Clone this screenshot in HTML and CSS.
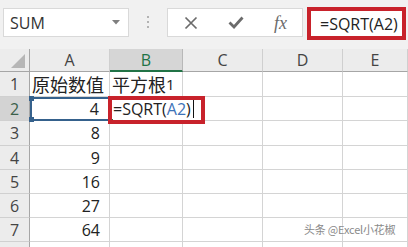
FILE: index.html
```html
<!DOCTYPE html>
<html lang="zh">
<head>
<meta charset="utf-8">
<link rel="stylesheet" href="styles.css">
</head>
<body>
<div class="app">
  <div class="toolbar">
    <div class="namebox">
      <span class="nb-text">SUM</span>
      <svg class="nb-arrow" width="8" height="5" viewBox="0 0 8 5"><polygon points="0,0 8,0 4,4.5" fill="#7f7f7f"/></svg>
    </div>
    <div class="dots"><i></i><i></i><i></i></div>
    <div class="fxbox">
      <svg class="ico-x" width="14" height="14" viewBox="0 0 14 14"><path d="M1.5 1.5 L12.5 12.5 M12.5 1.5 L1.5 12.5" stroke="#6b6b6b" stroke-width="1.7" fill="none"/></svg>
      <svg class="ico-check" width="16" height="13" viewBox="0 0 16 13"><path d="M1.5 6.5 L6 11 L14.5 1.5" stroke="#6b6b6b" stroke-width="2.8" fill="none"/></svg>
      <span class="ico-fx">fx</span>
    </div>
    <div class="formula"><span>=SQRT(A2)</span></div>
  </div>

  <div class="sheet">
    <div class="hd corner"><svg width="16" height="16" viewBox="0 0 16 16"><polygon points="15,1 15,15 1,15" fill="#b6b6b6"/></svg></div>
    <div class="hd col">A</div>
    <div class="hd col sel">B</div>
    <div class="hd col">C</div>
    <div class="hd col">D</div>
    <div class="hd col">E</div>

    <div class="hd row">1</div>
    <div class="c cjk">原始数值</div>
    <div class="c cjk">平方根<span class="one">1</span></div>
    <div class="c"></div><div class="c"></div><div class="c"></div>

    <div class="hd row sel">2</div>
    <div class="c num ref">4<i class="h tl"></i><i class="h bl"></i></div>
    <div class="c edit"><span class="etext">=SQRT(<span class="blue">A2</span>)<i class="caret"></i></span><i class="uline"></i><i class="redbox"></i></div>
    <div class="c"></div><div class="c"></div><div class="c"></div>

    <div class="hd row">3</div>
    <div class="c num">8</div>
    <div class="c"></div><div class="c"></div><div class="c"></div><div class="c"></div>

    <div class="hd row">4</div>
    <div class="c num">9</div>
    <div class="c"></div><div class="c"></div><div class="c"></div><div class="c"></div>

    <div class="hd row">5</div>
    <div class="c num">16</div>
    <div class="c"></div><div class="c"></div><div class="c"></div><div class="c"></div>

    <div class="hd row">6</div>
    <div class="c num">27</div>
    <div class="c"></div><div class="c"></div><div class="c"></div><div class="c"></div>

    <div class="hd row">7</div>
    <div class="c num">64</div>
    <div class="c"></div><div class="c"></div><div class="c"></div><div class="c"></div>

    <div class="hd row last"></div>
    <div class="c last"></div><div class="c last"></div><div class="c last"></div><div class="c last"></div><div class="c last"></div>

    <div class="watermark">头条 @Excel小花椒</div>
  </div>
</div>
</body>
</html>
```

FILE: styles.css
```css
* { box-sizing: border-box; }
html, body { margin: 0; padding: 0; }
body {
  width: 408px;
  height: 247px;
  overflow: hidden;
  background: #ffffff;
  font-family: "Open Sans", "Noto Sans CJK SC", sans-serif;
  color: #222;
}
.app { width: 408px; height: 247px; overflow: hidden; }

.toolbar {
  height: 49px;
  background: #f1f1f1;
  display: flex;
  align-items: flex-start;
  padding-left: 3px;
}
.namebox {
  margin-top: 8px;
  width: 126px;
  height: 29px;
  background: #fff;
  border: 1px solid #d9d9d9;
  display: flex;
  align-items: center;
  justify-content: space-between;
  padding: 0 8px 0 6px;
}
.nb-text { font-size: 16px; color: #333; }
.nb-arrow { display: block; }
.dots {
  margin-top: 16px;
  margin-left: 18px;
  width: 2px;
  display: flex;
  flex-direction: column;
  gap: 3px;
}
.dots i { display: block; width: 2px; height: 2px; background: #b3b3b3; }
.fxbox {
  margin-top: 8px;
  margin-left: 18px;
  width: 136px;
  height: 29px;
  background: #fff;
  border: 1px solid #d9d9d9;
  display: flex;
  align-items: center;
  padding-left: 16px;
}
.ico-x { display: block; }
.ico-check { display: block; margin-left: 30px; }
.ico-fx {
  margin-left: 30px;
  font-family: "Liberation Serif", "DejaVu Serif", serif;
  font-style: italic;
  font-size: 18px;
  color: #6b6b6b;
  line-height: 1;
}
.formula {
  margin-top: 7px;
  margin-left: 4px;
  width: 99px;
  height: 33px;
  border: 4px solid #c8222b;
  background: #fff;
  display: flex;
  align-items: center;
  padding-left: 9px;
  font-size: 16px;
  color: #222;
}

.sheet {
  position: relative;
  display: grid;
  grid-template-columns: 30px 80px 73px 80px 80px 65px;
  grid-template-rows: 23px 25px 24px 25px 24px 24px 24px 24px 5px;
  background: #fff;
}
.hd {
  background: #ececec;
  color: #444;
  font-size: 16px;
  display: flex;
  align-items: center;
  justify-content: center;
}
.hd.col {
  border-right: 1px solid #cfcfcf;
  border-bottom: 1px solid #a6a6a6;
}
.hd.col.sel {
  background: #d6d6d6;
  color: #217346;
  border-bottom: 2px solid #217346;
  border-right: 1px solid #b8b8b8;
}
.hd.corner {
  border-right: 1px solid #a6a6a6;
  border-bottom: 1px solid #a6a6a6;
  align-items: flex-end;
  justify-content: flex-end;
  padding: 0 3px 2px 0;
}
.hd.corner svg { display: block; }
.hd.row {
  border-right: 1px solid #a6a6a6;
  border-bottom: 1px solid #d0d0d0;
}
.hd.row.sel {
  background: #d3d3d3;
  color: #3b5f4a;
}
.last { border-bottom: 0 !important; }
.c {
  border-right: 1px solid #d4d4d4;
  border-bottom: 1px solid #d4d4d4;
  font-size: 16px;
  display: flex;
  align-items: center;
  padding: 0 3px;
  white-space: nowrap;
  position: relative;
}
.c.cjk {
  font-size: 18px;
  padding-left: 2px;
}
.c.cjk .one { font-size: 15px; }
.c.num {
  justify-content: flex-end;
  padding-right: 9px;
}
.c.ref {
  border: 2px solid #35618c;
}
.c.ref .h {
  position: absolute;
  width: 5px;
  height: 5px;
  background: #35618c;
}
.c.ref .tl { left: -3px; top: -3px; }
.c.ref .bl { left: -3px; bottom: -3px; }
.c.edit { z-index: 2; padding-left: 3px; }
.etext {
  position: relative;
  z-index: 1;
  background: #fff;
  display: flex;
  align-items: center;
}
.blue { color: #3d73b8; }
.caret {
  display: inline-block;
  width: 1px;
  height: 19px;
  background: #111;
  margin-left: 2px;
}
.uline {
  position: absolute;
  left: 1px;
  right: 0;
  bottom: -1px;
  height: 2px;
  background: #217346;
}
.uline::after {
  content: "";
  position: absolute;
  right: -3px;
  top: -2px;
  width: 5px;
  height: 5px;
  background: #217346;
}
.redbox {
  position: absolute;
  left: -2px;
  top: -1px;
  right: -23px;
  bottom: -4px;
  border: 4px solid #c8222b;
  z-index: 3;
}
.watermark {
  position: absolute;
  left: 304px;
  top: 172px;
  white-space: nowrap;
  font-family: "Noto Sans CJK SC", "Noto Sans", sans-serif;
  font-size: 11px;
  letter-spacing: -0.2px;
  color: #8a8a8a;
  text-shadow: 0 0 2px #fff, 0 0 2px #fff;
  z-index: 4;
}
```
